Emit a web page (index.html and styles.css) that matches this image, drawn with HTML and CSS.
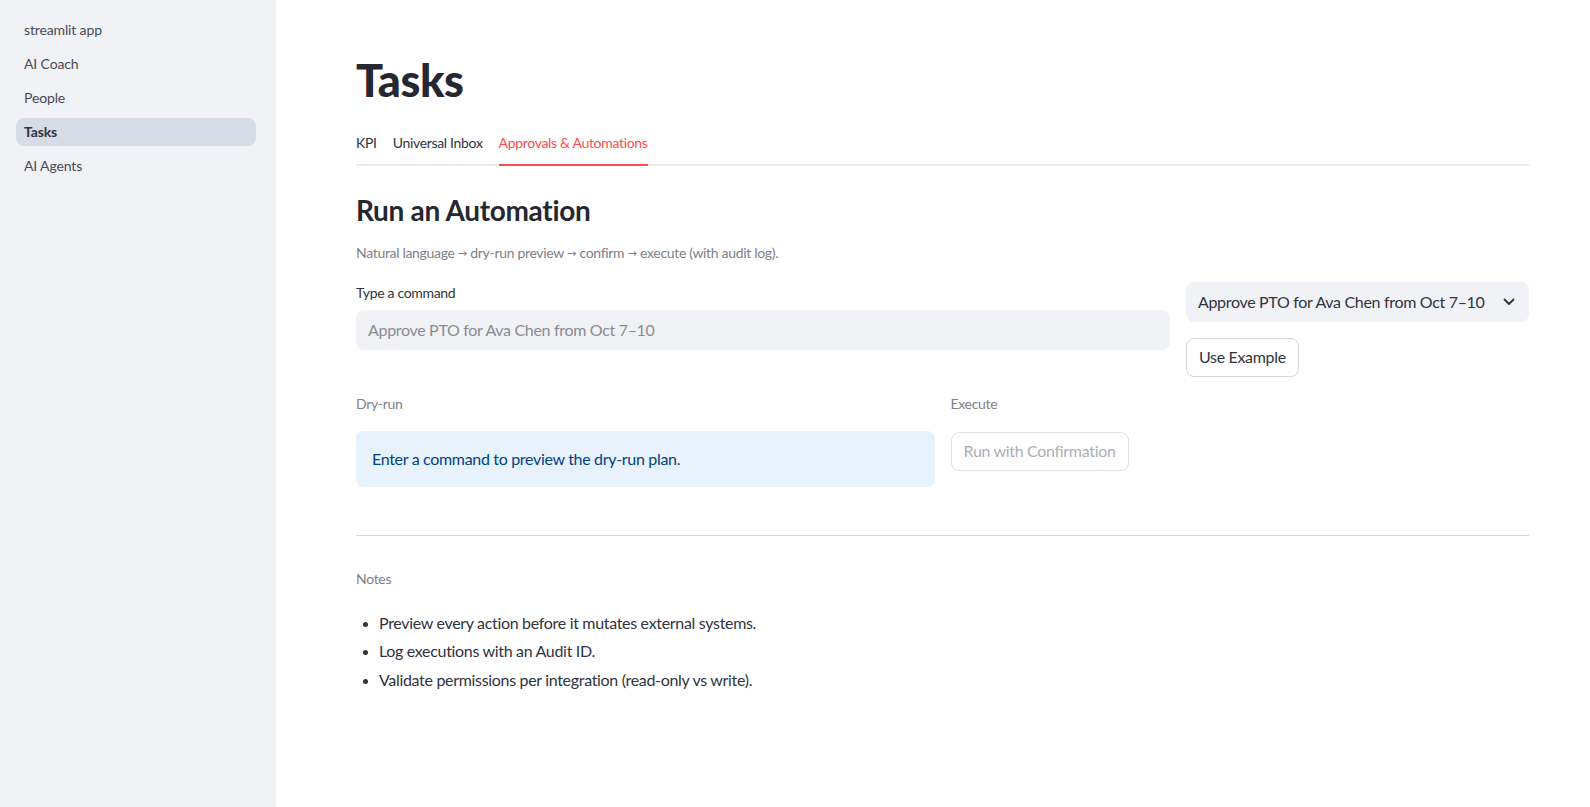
FILE: index.html
```html
<!DOCTYPE html>
<html lang="en">
<head>
<meta charset="utf-8">
<title>Tasks</title>
<link rel="stylesheet" href="styles.css">
</head>
<body>
<div class="app">
  <aside class="sidebar">
    <nav class="nav">
      <a class="nav-item">streamlit app</a>
      <a class="nav-item">AI Coach</a>
      <a class="nav-item">People</a>
      <a class="nav-item active">Tasks</a>
      <a class="nav-item">AI Agents</a>
    </nav>
  </aside>
  <main class="main">
    <h1 class="title">Tasks</h1>
    <div class="tabs">
      <div class="tab">KPI</div>
      <div class="tab">Universal Inbox</div>
      <div class="tab active">Approvals &amp; Automations</div>
    </div>
    <h3 class="section-title">Run an Automation</h3>
    <p class="caption">Natural language <span class="arr">→</span> dry-run preview <span class="arr">→</span> confirm <span class="arr">→</span> execute (with audit log).</p>
    <div class="row-command">
      <div class="col">
        <label class="label">Type a command</label>
        <div class="input placeholder">Approve PTO for Ava Chen from Oct 7–10</div>
      </div>
      <div class="col col-right">
        <div class="select">
          <span>Approve PTO for Ava Chen from Oct 7–10</span>
          <svg class="chev" width="12" height="8" viewBox="0 0 12 8"><path d="M1.5 1.5 L6 6 L10.5 1.5" fill="none" stroke="#31333f" stroke-width="1.8" stroke-linecap="round" stroke-linejoin="round"/></svg>
        </div>
        <button class="btn">Use Example</button>
      </div>
    </div>
    <div class="row-run">
      <div class="col">
        <div class="small-label">Dry-run</div>
        <div class="info">Enter a command to preview the dry-run plan.</div>
      </div>
      <div class="col">
        <div class="small-label">Execute</div>
        <button class="btn btn-disabled" disabled>Run with Confirmation</button>
      </div>
    </div>
    <hr class="divider">
    <div class="small-label notes">Notes</div>
    <ul class="list">
      <li>Preview every action before it mutates external systems.</li>
      <li>Log executions with an Audit ID.</li>
      <li>Validate permissions per integration (read-only vs write).</li>
    </ul>
  </main>
</div>
</body>
</html>
```
FILE: styles.css
```css
* { box-sizing: border-box; }
html, body {
  margin: 0;
  padding: 0;
  height: 100%;
}
body {
  font-family: "Lato", "Noto Sans", "Liberation Sans", sans-serif;
  color: #31333f;
  background: #ffffff;
  letter-spacing: -0.02em;
}
.app {
  display: flex;
  min-height: 807px;
}
.sidebar {
  width: 276px;
  flex: 0 0 276px;
  background: #f0f2f6;
  padding: 16px 20px 0 16px;
}
.nav {
  display: flex;
  flex-direction: column;
  gap: 6px;
}
.nav-item {
  display: block;
  height: 28px;
  line-height: 28px;
  padding: 0 8px;
  font-size: 14px;
  color: #4a4b55;
  border-radius: 8px;
  letter-spacing: -0.01em;
}
.nav-item.active {
  background: #d6dbe5;
  color: #31333f;
  font-weight: 700;
}
.main {
  flex: 1;
  padding: 54px 61px 40px 80px;
  min-width: 0;
}
.title {
  margin: 0;
  font-size: 45px;
  line-height: 52px;
  font-weight: 900;
  color: #262730;
  letter-spacing: -0.01em;
}
.tabs {
  margin-top: 25px;
  display: flex;
  gap: 16px;
  border-bottom: 2px solid #ebebed;
}
.tab {
  font-size: 14px;
  line-height: 24px;
  padding-bottom: 9px;
  color: #31333f;
}
.tab.active {
  color: #ff4b4b;
  border-bottom: 2px solid #ff4b4b;
  margin-bottom: -2px;
}
.section-title {
  margin: 26px 0 0;
  font-size: 28px;
  line-height: 36px;
  font-weight: 700;
  color: #262730;
}
.caption {
  margin: 14px 0 0;
  font-size: 14px;
  line-height: 21px;
  color: #7f8088;
}
.arr {
  font-family: "DejaVu Sans", sans-serif;
  font-size: 11px;
  letter-spacing: 0;
  position: relative;
  top: -1px;
}
.row-command {
  margin-top: 17px;
  display: grid;
  grid-template-columns: minmax(0, 2.373fr) minmax(0, 1fr);
  gap: 16px;
}
.col {
  display: flex;
  flex-direction: column;
  align-items: flex-start;
}
.col-right {
  gap: 16px;
}
.label {
  font-size: 14px;
  line-height: 21px;
  margin-bottom: 7px;
  color: #31333f;
}
.input {
  width: 100%;
  height: 40px;
  background: #f0f2f6;
  border-radius: 8px;
  padding: 0 12px 2px;
  display: flex;
  align-items: center;
  font-size: 16px;
}
.placeholder {
  color: #8a8b92;
}
.select {
  width: 100%;
  height: 40px;
  background: #f0f2f6;
  border-radius: 8px;
  padding: 0 14px 2px 12px;
  display: flex;
  align-items: center;
  justify-content: space-between;
  font-size: 16px;
  color: #31333f;
}
.chev { flex: 0 0 auto; margin-top: 2px; }
.btn {
  font-family: inherit;
  letter-spacing: inherit;
  font-size: 16px;
  height: 39px;
  padding: 0 12px 2px;
  background: #ffffff;
  border: 1px solid #d6d6d9;
  border-radius: 8px;
  color: #31333f;
}
.btn-disabled {
  color: #adaeb3;
  border-color: #e0e0e3;
  margin-top: 1px;
}
.row-run {
  margin-top: 16px;
  display: grid;
  grid-template-columns: minmax(0, 1fr) minmax(0, 1fr);
  gap: 16px;
}
.small-label {
  font-size: 14px;
  line-height: 21px;
  color: #7f8088;
}
.row-run .small-label {
  margin-bottom: 17px;
}
.info {
  width: 100%;
  height: 56px;
  background: #e8f2fc;
  border-radius: 8px;
  padding: 0 16px 2px;
  display: flex;
  align-items: center;
  font-size: 16px;
  color: #004280;
}
.divider {
  margin: 48px 0 0;
  border: 0;
  border-top: 1px solid #d6d6d9;
}
.notes {
  margin-top: 32px;
}
.list {
  margin: 20px 0 0;
  padding: 0 0 0 23px;
  font-size: 16px;
  line-height: 28.4px;
  color: #31333f;
}
.list li::marker {
  font-size: 14px;
}
```
